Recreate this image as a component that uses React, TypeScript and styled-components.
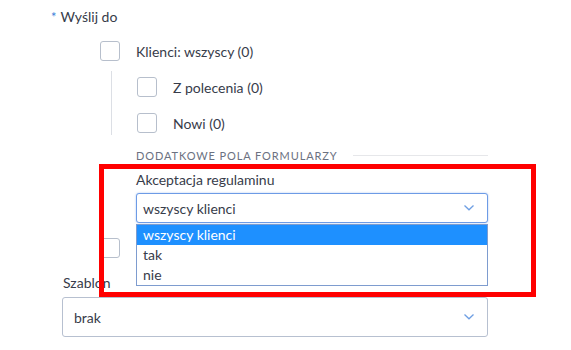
import styled, { createGlobalStyle } from 'styled-components';

const GlobalStyle = createGlobalStyle`
  body {
    margin: 0;
    background: #fff;
    font-family: Lato, 'Open Sans', sans-serif;
    color: #373c4a;
  }
`;

const Chevron = () => (
  <svg width="12" height="8" viewBox="0 0 12 8">
    <path d="M1.5 1.5 L6 5.8 L10.5 1.5" fill="none" stroke="#6f9fe3" strokeWidth="1.3" />
  </svg>
);

const App = () => {
  return (
    <Page>
      <GlobalStyle />
      <FieldLabel>
        <Required>*</Required>Wyślij do
      </FieldLabel>
      <CheckRow $indent={100}>
        <Box />
        <CheckText>Klienci: wszyscy (0)</CheckText>
      </CheckRow>
      <SubGroup>
        <CheckRow $indent={0}>
          <Box />
          <CheckText>Z polecenia (0)</CheckText>
        </CheckRow>
        <CheckRow $indent={0}>
          <Box />
          <CheckText>Nowi (0)</CheckText>
        </CheckRow>
      </SubGroup>
      <SectionHead>
        <SectionTitle>Dodatkowe pola formularzy</SectionTitle>
        <SectionRule />
      </SectionHead>
      <ExtraField>
        <SmallLabel>Akceptacja regulaminu</SmallLabel>
        <SelectWrap>
          <Select $focused>
            <span>wszyscy klienci</span>
            <Chevron />
          </Select>
          <Options>
            <Option $active>wszyscy klienci</Option>
            <Option>tak</Option>
            <Option>nie</Option>
          </Options>
        </SelectWrap>
      </ExtraField>
      <HiddenRow>
        <Box />
        <Tick />
      </HiddenRow>
      <TemplateField>
        <SmallLabel>Szablon</SmallLabel>
        <Select $tall>
          <span>brak</span>
          <Chevron />
        </Select>
      </TemplateField>
      <Highlight />
    </Page>
  );
};

export default App;

const Page = styled.div`
  position: relative;
  width: 571px;
  height: 350px;
  overflow: hidden;
  display: flex;
  flex-direction: column;
  padding-top: 7px;
  box-sizing: border-box;
`;

const FieldLabel = styled.div`
  padding-left: 51px;
  font-size: 14px;
  line-height: 20px;
  height: 20px;
`;

const Required = styled.span`
  color: #3b7fd9;
  margin-right: 4px;
  font-size: 13px;
`;

const CheckRow = styled.div<{ $indent: number }>`
  display: flex;
  align-items: center;
  padding-left: ${({ $indent }) => $indent}px;
  height: 20px;
  margin-top: 14px;
`;

const Box = styled.div`
  width: 18px;
  height: 18px;
  border: 1px solid #b7bfcc;
  border-radius: 3px;
  background: #fff;
  flex-shrink: 0;
`;

const CheckText = styled.span`
  margin-left: 16px;
  font-size: 14px;
`;

const SubGroup = styled.div`
  margin-left: 111px;
  margin-top: 10px;
  border-left: 1px solid #dcdfe5;
  padding-left: 25px;
  padding-bottom: 2px;
  display: flex;
  flex-direction: column;

  & > ${CheckRow}:first-child {
    margin-top: 6px;
  }
  & > ${CheckRow} + ${CheckRow} {
    margin-top: 16px;
  }
`;

const SectionHead = styled.div`
  display: flex;
  align-items: center;
  margin: 12px 0 0 136px;
  height: 16px;
  width: 352px;
`;

const SectionTitle = styled.span`
  font-size: 11px;
  letter-spacing: 0.9px;
  text-transform: uppercase;
  color: #6b7181;
  white-space: nowrap;
`;

const SectionRule = styled.div`
  flex: 1;
  height: 1px;
  background: #e6e7ea;
  margin-left: 15px;
`;

const ExtraField = styled.div`
  margin: 8px 0 0 136px;
  width: 352px;
  display: flex;
  flex-direction: column;
  position: relative;
  z-index: 2;
`;

const SmallLabel = styled.div`
  font-size: 14px;
  line-height: 18px;
  margin-bottom: 4px;
`;

const SelectWrap = styled.div`
  position: relative;
`;

const Select = styled.div<{ $focused?: boolean; $tall?: boolean }>`
  height: ${({ $tall }) => ($tall ? 40 : 30)}px;
  box-sizing: border-box;
  display: flex;
  align-items: center;
  justify-content: space-between;
  padding: 0 12px 0 ${({ $tall }) => ($tall ? 11 : 6)}px;
  font-size: 14px;
  background: #fff;
  border: 1px solid ${({ $focused }) => ($focused ? '#6d9be6' : '#b7c0d0')};
  border-radius: 3px;
  box-shadow: ${({ $focused }) => ($focused ? '0 0 2px rgba(80,140,230,0.5)' : 'none')};
`;

const Options = styled.div`
  position: absolute;
  left: 0;
  right: 0;
  top: 31px;
  border: 1px solid #7e9ccf;
  background: #fff;
`;

const Option = styled.div<{ $active?: boolean }>`
  height: 20px;
  line-height: 20px;
  padding-left: 6px;
  font-size: 14px;
  background: ${({ $active }) => ($active ? '#1e90ff' : '#fff')};
  color: ${({ $active }) => ($active ? '#fff' : '#373c4a')};
`;

const HiddenRow = styled.div`
  display: flex;
  align-items: center;
  padding-left: 100px;
  margin-top: 15px;
  height: 20px;
`;

const Tick = styled.div`
  width: 1px;
  height: 4px;
  background: #c9ccd3;
  margin-left: 16px;
`;

const TemplateField = styled.div`
  margin: 16px 0 0 62px;
  width: 426px;
  display: flex;
  flex-direction: column;

  & > ${SmallLabel} {
    padding-left: 1px;
    margin-bottom: 5px;
  }
`;

const Highlight = styled.div`
  position: absolute;
  left: 99px;
  top: 164px;
  width: 437px;
  height: 133px;
  box-sizing: border-box;
  border: 5px solid #ff0000;
  z-index: 3;
  pointer-events: none;
`;
